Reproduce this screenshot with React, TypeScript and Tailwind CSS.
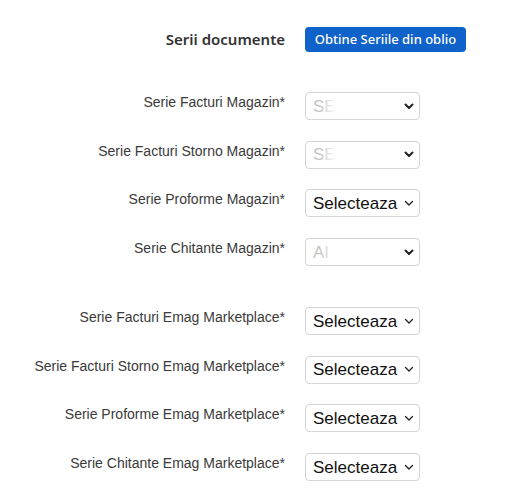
import React from 'react';

type Row = { label: string; value: string; faded?: boolean };

const magazin: Row[] = [
  { label: 'Serie Facturi Magazin*', value: 'SE', faded: true },
  { label: 'Serie Facturi Storno Magazin*', value: 'SE', faded: true },
  { label: 'Serie Proforme Magazin*', value: 'Selecteaza' },
  { label: 'Serie Chitante Magazin*', value: 'AI', faded: true },
];

const emag: Row[] = [
  { label: 'Serie Facturi Emag Marketplace*', value: 'Selecteaza' },
  { label: 'Serie Facturi Storno Emag Marketplace*', value: 'Selecteaza' },
  { label: 'Serie Proforme Emag Marketplace*', value: 'Selecteaza' },
  { label: 'Serie Chitante Emag Marketplace*', value: 'Selecteaza' },
];

const Chevron = ({ bold }: { bold?: boolean }) => (
  <svg width="10" height="7" viewBox="0 0 10 7" fill="none" stroke="#222" strokeWidth={bold ? 2 : 1.3} strokeLinecap="round" strokeLinejoin="round">
    <path d="M1.5 1.5 5 5l3.5-3.5" />
  </svg>
);

const SelectBox = ({ value, faded }: { value: string; faded?: boolean }) => (
  <div className="relative h-[28px] w-[115px] rounded-[4px] border border-[#d4d4d4] bg-white flex items-center overflow-hidden">
    <span
      className={`pl-[7px] text-[17px] leading-none ${faded ? 'text-[#c4c4c4]' : 'text-[#111]'}`}
      style={{ fontFamily: '"Liberation Sans", Arial, sans-serif' }}
    >
      {value}
    </span>
    {faded && (
      <div className="absolute left-[13px] top-[1px] bottom-[1px] w-[18px] bg-linear-to-r from-white/0 to-white" />
    )}
    {faded && <div className="absolute left-[31px] top-[1px] bottom-[1px] w-[60px] bg-white" />}
    <div className="absolute right-[5px] top-0 bottom-0 flex items-center">
      <Chevron bold={faded} />
    </div>
  </div>
);

const FieldRow = ({ row }: { row: Row }) => (
  <div className="flex items-start gap-5">
    <div
      className="w-[285px] pt-[1px] text-right text-[14px] leading-[18px] text-[#3a3a3a]"
      style={{ fontFamily: '"Liberation Sans", Arial, sans-serif' }}
    >
      {row.label}
    </div>
    <SelectBox value={row.value} faded={row.faded} />
  </div>
);

export default function App() {
  return (
    <div className="w-[516px] h-[504px] bg-white pt-[27px]">
      {/* Header */}
      <div className="flex items-center gap-5">
        <div
          className="w-[285px] text-right text-[15px] font-semibold text-[#333]"
          style={{ fontFamily: '"Noto Sans", "Open Sans", sans-serif' }}
        >
          Serii documente
        </div>
        <button
          className="h-[25px] w-[161px] rounded-[4px] bg-[#0f62c9] text-white text-[13px] font-medium"
          style={{ fontFamily: '"Noto Sans", "Open Sans", sans-serif' }}
        >
          Obtine Seriile din oblio
        </button>
      </div>

      {/* Magazin */}
      <div className="mt-[40px] flex flex-col gap-[20.7px]">
        {magazin.map((r) => (
          <FieldRow key={r.label} row={r} />
        ))}
      </div>

      {/* Emag */}
      <div className="mt-[41px] flex flex-col gap-[20.7px]">
        {emag.map((r) => (
          <FieldRow key={r.label} row={r} />
        ))}
      </div>
    </div>
  );
}
